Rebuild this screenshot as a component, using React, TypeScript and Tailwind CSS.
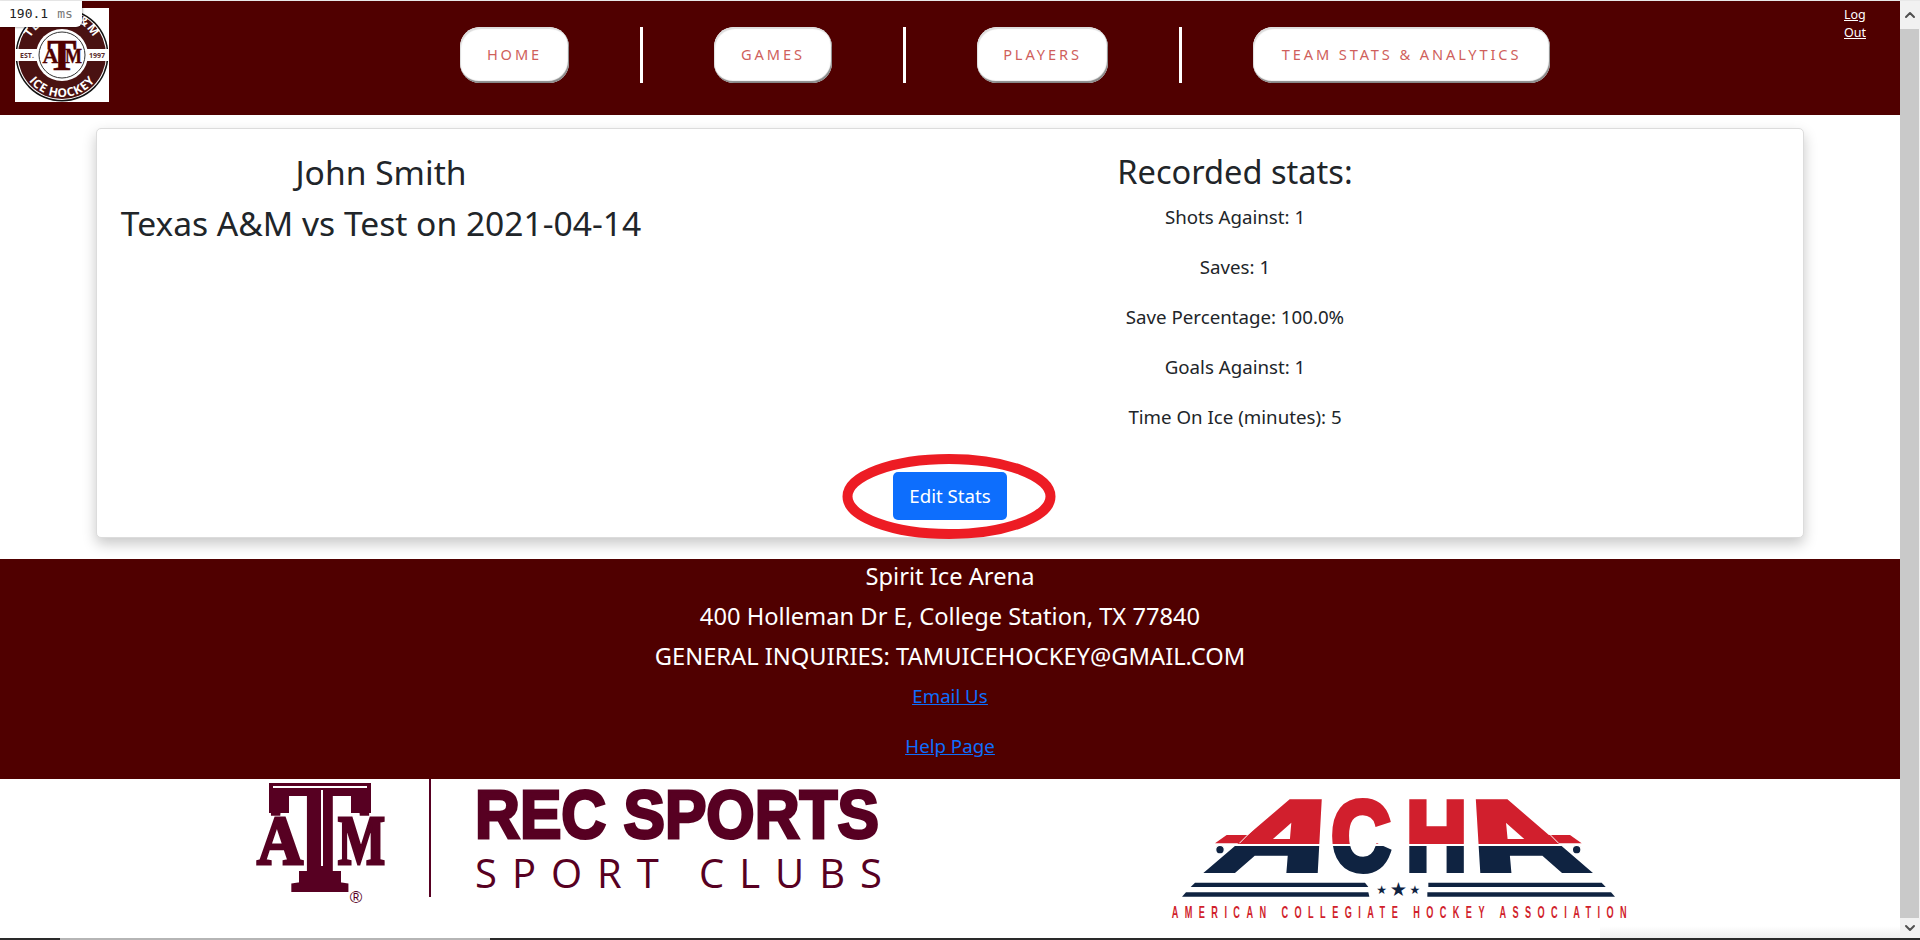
import { Fragment } from "react";
import { ChevronUp, ChevronDown } from "lucide-react";

const navItems = [
  { label: "HOME", width: "w-[109px]" },
  { label: "GAMES", width: "w-[118px]" },
  { label: "PLAYERS", width: "w-[131px]" },
  { label: "TEAM STATS & ANALYTICS", width: "w-[297px]" },
];

const stats = [
  "Shots Against: 1",
  "Saves: 1",
  "Save Percentage: 100.0%",
  "Goals Against: 1",
  "Time On Ice (minutes): 5",
];

function CrestLogo() {
  return (
    <svg viewBox="0 0 94 94" className="h-[94px] w-[94px] bg-white shrink-0">
      <defs>
        <path id="crestTop" d="M 11 47 A 36 36 0 0 1 83 47" />
        <path id="crestBottom" d="M 5 47 A 42 42 0 0 0 89 47" />
      </defs>
      <circle cx="47" cy="47" r="46.5" fill="#111" />
      <circle cx="47" cy="47" r="45" fill="#fff" />
      <circle cx="47" cy="47" r="44" fill="#4a1212" />
      <rect x="0" y="41" width="94" height="12" fill="#fff" />
      <circle cx="47" cy="47" r="26" fill="#fff" />
      <circle cx="47" cy="47" r="23" fill="#fff" stroke="#333" strokeWidth="1" />
      <text fontFamily="Open Sans, sans-serif" fontWeight="700" fontSize="12" fill="#fff" letterSpacing="1">
        <textPath href="#crestTop" startOffset="50%" textAnchor="middle">TEXAS A&amp;M</textPath>
      </text>
      <text fontFamily="Open Sans, sans-serif" fontWeight="700" fontSize="12" fill="#fff" letterSpacing="0.6">
        <textPath href="#crestBottom" startOffset="50%" textAnchor="middle">ICE HOCKEY</textPath>
      </text>
      <text x="12" y="50" textAnchor="middle" fontFamily="Open Sans, sans-serif" fontWeight="700" fontSize="7" fill="#5a2a2a">EST.</text>
      <text x="82" y="50" textAnchor="middle" fontFamily="Open Sans, sans-serif" fontWeight="700" fontSize="7" fill="#5a2a2a">1997</text>
      <text x="47" y="62" textAnchor="middle" fontFamily="Liberation Serif, serif" fontWeight="700" fontSize="44" stroke="#500000" strokeWidth="0.6" fill="#500000">T</text>
      <text x="35.5" y="55" textAnchor="middle" fontFamily="Liberation Serif, serif" fontWeight="700" fontSize="22" stroke="#500000" strokeWidth="0.4" fill="#500000">A</text>
      <text x="50" y="55" fontFamily="Liberation Serif, serif" fontWeight="700" fontSize="22" textLength="17" lengthAdjust="spacingAndGlyphs" stroke="#500000" strokeWidth="0.4" fill="#500000">M</text>
    </svg>
  );
}

function RecSportsLogo() {
  const maroon = "#570022";
  return (
    <svg viewBox="230 779 680 159" className="h-[159px] w-[680px] shrink-0">
      <text x="270" y="890" fontFamily="Liberation Serif, serif" fontWeight="700" fontSize="162" textLength="100" lengthAdjust="spacingAndGlyphs" stroke={maroon} strokeWidth="3" fill={maroon}>T</text>
      <text x="257" y="864" fontFamily="Liberation Serif, serif" fontWeight="700" fontSize="69" textLength="46" lengthAdjust="spacingAndGlyphs" stroke={maroon} strokeWidth="3" fill={maroon}>A</text>
      <text x="338" y="864" fontFamily="Liberation Serif, serif" fontWeight="700" fontSize="69" textLength="47" lengthAdjust="spacingAndGlyphs" stroke={maroon} strokeWidth="3" fill={maroon}>M</text>
      {/* slab parts of the T mark */}
      <rect x="269" y="783" width="102" height="13" fill={maroon} />
      <rect x="269" y="783" width="20" height="30" fill={maroon} />
      <rect x="351" y="783" width="20" height="30" fill={maroon} />
      <rect x="299" y="871" width="42" height="20" fill={maroon} />
      <rect x="273" y="786" width="94" height="2" fill="#fff" />
      <rect x="321" y="790" width="2" height="76" fill="#fff" />
      <text x="356" y="903" textAnchor="middle" fontFamily="Liberation Sans, sans-serif" fontSize="17" fill={maroon}>®</text>
      <rect x="429" y="779" width="2" height="118" fill={maroon} />
      <text x="475" y="838" fontFamily="Liberation Sans, sans-serif" fontWeight="700" fontSize="69" textLength="404" lengthAdjust="spacingAndGlyphs" stroke={maroon} strokeWidth="3" fill={maroon}>REC SPORTS</text>
      <text x="475" y="888" fontFamily="Open Sans, sans-serif" fontSize="40" textLength="407" fill={maroon}>SPORT CLUBS</text>
    </svg>
  );
}

function AchaLogo() {
  const red = "#d11f2d";
  const navy = "#0f2341";
  const font = "Liberation Sans, sans-serif";
  return (
    <svg viewBox="0 0 1500 474" className="h-[158px] w-[500px] shrink-0">
      <defs>
        <linearGradient id="achaFill" gradientUnits="userSpaceOnUse" x1="0" y1="50" x2="0" y2="280">
          <stop offset="0.62" stopColor={red} />
          <stop offset="0.62" stopColor="#fff" />
          <stop offset="0.64" stopColor="#fff" />
          <stop offset="0.64" stopColor={navy} />
        </linearGradient>
        <linearGradient id="achaFillSkew" gradientUnits="userSpaceOnUse" x1="0" y1="-221" x2="0" y2="9">
          <stop offset="0.62" stopColor={red} />
          <stop offset="0.62" stopColor="#fff" />
          <stop offset="0.64" stopColor="#fff" />
          <stop offset="0.64" stopColor={navy} />
        </linearGradient>
      </defs>
      {/* letters */}
      <g fontFamily={font} fontWeight="700" fontSize="296" strokeWidth="18">
        <text transform="translate(174,271) skewX(-31.4)" textLength="327" lengthAdjust="spacingAndGlyphs" fill="url(#achaFillSkew)" stroke="url(#achaFillSkew)">A</text>
        <text x="544" y="271" textLength="178" lengthAdjust="spacingAndGlyphs" fill="url(#achaFill)" stroke="url(#achaFill)">C</text>
        <text x="769" y="271" textLength="182" lengthAdjust="spacingAndGlyphs" fill="url(#achaFill)" stroke="url(#achaFill)">H</text>
        <text transform="translate(994,271) skewX(31.4)" textLength="322" lengthAdjust="spacingAndGlyphs" fill="url(#achaFillSkew)" stroke="url(#achaFillSkew)">A</text>
      </g>
      {/* wings */}
      <polygon points="195,190 230,165 300,165 272,190" fill={red} />
      <polygon points="1295,190 1260,165 1195,165 1222,190" fill={red} />
      <line x1="268" y1="190" x2="405" y2="52" stroke="#fff" strokeWidth="3" />
      <line x1="1226" y1="190" x2="1090" y2="52" stroke="#fff" strokeWidth="3" />
      <circle cx="210" cy="209" r="13" fill={navy} stroke="#fff" strokeWidth="4" />
      <circle cx="1280" cy="209" r="13" fill={navy} stroke="#fff" strokeWidth="4" />
      {/* stripes */}
      <polygon points="135,308 645,308 655,321 122,321" fill={navy} />
      <polygon points="108,337 655,337 658,350 96,350" fill={navy} />
      <polygon points="835,308 1355,308 1367,321 835,321" fill={navy} />
      <polygon points="832,337 1383,337 1395,350 832,350" fill={navy} />
      <g fontFamily="DejaVu Sans, sans-serif" fill={navy} textAnchor="middle">
        <text x="695" y="343" fontSize="36">★</text>
        <text x="745" y="349" fontSize="58">★</text>
        <text x="795" y="343" fontSize="36">★</text>
      </g>
      <text transform="translate(65,413) scale(0.55,1)" fontFamily={font} fontWeight="700" fontSize="50" textLength="2482" fill={red}>AMERICAN COLLEGIATE HOCKEY ASSOCIATION</text>
    </svg>
  );
}

function Scrollbar() {
  return (
    <div className="flex w-5 shrink-0 flex-col bg-[#f1f1f1]">
      <div className="flex h-7 items-center justify-center">
        <ChevronUp size={16} strokeWidth={3} className="text-[#505050]" />
      </div>
      <div className="w-[19px] flex-1 bg-[#c9c9c9]" />
      <div className="flex h-5 items-center justify-center">
        <ChevronDown size={16} strokeWidth={3} className="text-[#505050]" />
      </div>
    </div>
  );
}

export default function App() {
  return (
    <div className="relative flex h-[940px] flex-col overflow-hidden bg-white font-['Noto_Sans',sans-serif] text-[#212529]">
      <div className="h-px shrink-0 bg-[#e8e8e8]" />

      <div className="flex min-h-0 flex-1">
        <main className="relative min-w-0 flex-1">
          {/* Navbar */}
          <header className="flex h-[114px] items-start bg-[#500000]">
            <div className="ml-[15px] mt-[7px]">
              <CrestLogo />
            </div>
            <nav className="ml-[351px] mt-[26px] flex items-center gap-[71px]">
              {navItems.map((item, i) => (
                <Fragment key={item.label}>
                  {i > 0 && <div className="h-14 w-[3px] bg-white" />}
                  <a
                    className={`flex h-[56px] items-center justify-center rounded-[20px] bg-white text-[14.6px] tracking-[2.9px] text-[#cf5f5c] shadow-[inset_-1px_-2px_1px_#888,inset_1px_2px_1px_#ddd] ${item.width}`}
                  >
                    {item.label}
                  </a>
                </Fragment>
              ))}
            </nav>
            <a className="ml-auto mr-[32px] mt-[5px] w-[24px] text-[12.5px] leading-[18px] text-white underline">
              Log Out
            </a>
          </header>

          {/* Stats card */}
          <section className="relative mx-[96px] mt-[13px] h-[410px] rounded-[5px] border border-[#dcdcdc] bg-white pt-[22px] shadow-[0_6px_14px_rgba(0,0,0,0.22)]">
            <div className="flex">
              <div className="ml-[22px] w-[524px] text-center text-[33.6px] leading-[42px]">
                <h3>John Smith</h3>
                <h3 className="mt-[9px]">Texas A&amp;M vs Test on 2021-04-14</h3>
              </div>
              <div className="ml-[392px] w-[400px] text-center">
                <h3 className="text-[32.6px] leading-[42px]">Recorded stats:</h3>
                <div className="mt-[9px] flex flex-col gap-5 text-[18.7px] leading-[30px]">
                  {stats.map((s) => (
                    <p key={s}>{s}</p>
                  ))}
                </div>
              </div>
            </div>
            <div className="mt-[40px] flex justify-center">
              <div className="relative">
                <button className="h-12 w-[114px] rounded-[5px] bg-[#0d6efd] text-[18.7px] text-white">
                  Edit Stats
                </button>
                {/* red annotation circled on the screenshot */}
                <svg viewBox="0 0 214 85" className="absolute -left-[51px] -top-[18px] h-[85px] w-[214px]">
                  <ellipse cx="107" cy="42.5" rx="101.5" ry="37.5" fill="none" stroke="#ed1c24" strokeWidth="10" />
                </svg>
              </div>
            </div>
          </section>

          {/* Footer */}
          <footer className="mt-[21px] h-[220px] bg-[#500000] pt-[2px] text-center text-white">
            <div className="flex flex-col gap-[10px] text-[23.7px] leading-[30px]">
              <p>Spirit Ice Arena</p>
              <p>400 Holleman Dr E, College Station, TX 77840</p>
              <p>GENERAL INQUIRIES: TAMUICEHOCKEY@GMAIL.COM</p>
            </div>
            <div className="mt-[10px] flex flex-col gap-5 text-[18.7px] leading-[30px] text-[#0d6efd] underline">
              <a>Email Us</a>
              <a>Help Page</a>
            </div>
          </footer>

          {/* Partner logos */}
          <div className="flex items-start pl-[230px]">
            <RecSportsLogo />
            <div className="ml-[240px] mt-px">
              <AchaLogo />
            </div>
          </div>
        </main>
        <Scrollbar />
      </div>

      <div className="flex h-[2px] shrink-0 bg-[#2a2a2a]">
        <div className="ml-[60px] w-[430px] bg-[#b5b5b5]" />
      </div>

      {/* devtools timing badge over the page */}
      <div className="absolute left-0 top-px flex h-[26px] w-[82px] items-center gap-[9px] rounded-br-md bg-white pl-[9px] font-['DejaVu_Sans_Mono',monospace] text-[13px] text-[#222] shadow-[1px_1px_2px_rgba(0,0,0,0.25)]">
        <span>190.1</span>
        <span className="text-[#777]">ms</span>
      </div>
      <div className="absolute bottom-[2px] right-5 h-3 w-[300px] bg-gradient-to-t from-[#eeeeee] to-transparent" />
    </div>
  );
}
